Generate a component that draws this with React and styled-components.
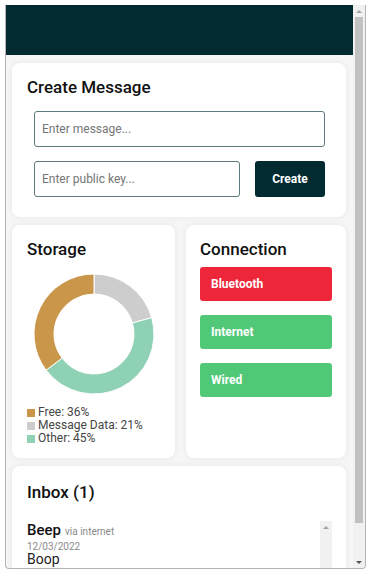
import React from "react";
import styled, { createGlobalStyle } from "styled-components";

const Global = createGlobalStyle`
  html, body { margin: 0; padding: 0; background: #ffffff; }
  body { font-family: Roboto, "Noto Sans", Arial, sans-serif; }
  * { box-sizing: border-box; }
`;

const Frame = styled.div`
  margin: 5px 0 0 5px;
  width: 361px;
  height: 564px;
  border: 1px solid #b4b4b4;
  border-top: none;
  border-radius: 0 0 4px 4px;
  overflow: hidden;
  display: flex;
  background: #f6f6f6;
`;

const Viewport = styled.div`
  flex: 1;
  min-width: 0;
  overflow: hidden;
`;

const Scrollbar = styled.div`
  width: 12px;
  flex: none;
  display: flex;
  flex-direction: column;
  background: #f1f1f1;
`;

const ScrollButton = styled.div`
  height: 12px;
  flex: none;
  display: flex;
  align-items: center;
  justify-content: center;
  &::before {
    content: "";
    width: 0;
    height: 0;
    border-left: 3px solid transparent;
    border-right: 3px solid transparent;
    ${(p) =>
      p.$dir === "up"
        ? `border-bottom: 3px solid ${p.$color};`
        : `border-top: 3px solid ${p.$color};`}
  }
`;

const Track = styled.div`
  flex: 1;
  display: flex;
  flex-direction: column;
`;

const Thumb = styled.div`
  height: ${(p) => p.$size}px;
  margin: 0 2px;
  background: #c1c1c1;
`;

const Header = styled.header`
  height: 50px;
  background: #022a31;
`;

const Main = styled.main`
  padding: 8px 7px 8px 6px;
  display: flex;
  flex-direction: column;
  gap: 8px;
`;

const Card = styled.section`
  background: #ffffff;
  border-radius: 8px;
  box-shadow: 0 0 6px rgba(0, 0, 0, 0.07);
  padding: ${(p) => p.$pad || "14px 15px"};
  min-width: 0;
`;

const Title = styled.h2`
  margin: 0;
  font-family: Roboto, Arial, sans-serif;
  font-size: 17px;
  line-height: 20px;
  font-weight: 500;
  color: #111;
`;

const Form = styled.div`
  margin: 14px 6px 6px 7px;
  display: flex;
  flex-direction: column;
  gap: 14px;
`;

const Row = styled.div`
  display: flex;
  gap: 15px;
`;

const Input = styled.input`
  display: block;
  width: 100%;
  flex: ${(p) => (p.$grow ? "1" : "none")};
  min-width: 0;
  height: 36px;
  border: 1px solid #5f7a7e;
  border-radius: 3px;
  padding: 0 7px;
  font-family: Roboto, Arial, sans-serif;
  font-size: 12px;
  color: #222;
  background: #fff;
  outline: none;
  &::placeholder { color: #757575; }
`;

const CreateButton = styled.button`
  width: 70px;
  height: 36px;
  flex: none;
  border: none;
  border-radius: 3px;
  background: #022a31;
  color: #fff;
  font-family: Roboto, Arial, sans-serif;
  font-size: 12px;
  font-weight: 700;
`;

const Grid = styled.div`
  display: grid;
  grid-template-columns: 163px 1fr;
  gap: 11px;
`;

const ChartWrap = styled.div`
  display: flex;
  justify-content: center;
  margin: 14px 0 11px;
`;

const Legend = styled.ul`
  list-style: none;
  margin: 0;
  padding: 0;
  font-size: 12px;
  line-height: 13px;
  color: #454545;
`;

const LegendItem = styled.li`
  display: flex;
  align-items: center;
  gap: 3px;
  &::before {
    content: "";
    width: 8px;
    height: 8px;
    background: ${(p) => p.$color};
  }
`;

const ConnList = styled.div`
  margin-top: 8px;
  display: flex;
  flex-direction: column;
  gap: 14px;
`;

const ConnButton = styled.button`
  height: 34px;
  border: none;
  border-radius: 3px;
  background: ${(p) => (p.$on ? "#50c878" : "#ee2639")};
  color: #fff;
  text-align: left;
  padding: 0 11px;
  font-family: Roboto, Arial, sans-serif;
  font-size: 12px;
  font-weight: 700;
`;

const MessageList = styled.div`
  margin-top: 19px;
  display: flex;
  background: #fff;
`;

const ListContent = styled.div`
  flex: 1;
  min-width: 0;
`;

const ListTrack = styled.div`
  width: 12px;
  flex: none;
  background: #f1f1f1;
`;

const Message = styled.article`
  padding: 0 0 14px;
`;

const Sender = styled.div`
  display: flex;
  align-items: baseline;
  gap: 4px;
  font-size: 15px;
  line-height: 18px;
  font-weight: 500;
  color: #111;
`;

const Meta = styled.span`
  font-size: 10px;
  font-weight: 400;
  color: #8a8a8a;
`;

const DateText = styled.div`
  font-size: 10px;
  line-height: 12px;
  color: #8a8a8a;
`;

const Body = styled.div`
  font-size: 14px;
  line-height: 13px;
  color: #222;
`;

const segments = [
  { label: "Message Data", value: 21, color: "#cdcdcd" },
  { label: "Other", value: 45, color: "#8fd1b4" },
  { label: "Free", value: 36, color: "#c9964a" },
];

function arcPath(cx, cy, R, r, a0, a1) {
  const pt = (rad, a) => [cx + rad * Math.sin(a), cy - rad * Math.cos(a)];
  const [x0, y0] = pt(R, a0);
  const [x1, y1] = pt(R, a1);
  const [x2, y2] = pt(r, a1);
  const [x3, y3] = pt(r, a0);
  const large = a1 - a0 > Math.PI ? 1 : 0;
  return `M${x0} ${y0} A${R} ${R} 0 ${large} 1 ${x1} ${y1} L${x2} ${y2} A${r} ${r} 0 ${large} 0 ${x3} ${y3} Z`;
}

function Donut() {
  const total = segments.reduce((s, x) => s + x.value, 0);
  let acc = 0;
  return (
    <svg width="122" height="122" viewBox="0 0 122 122">
      {segments.map((s) => {
        const a0 = (acc / total) * Math.PI * 2;
        acc += s.value;
        const a1 = (acc / total) * Math.PI * 2;
        return (
          <path
            key={s.label}
            d={arcPath(61, 61, 60, 40, a0, a1)}
            fill={s.color}
            stroke="#fff"
            strokeWidth="1"
          />
        );
      })}
    </svg>
  );
}

export default function App() {
  return (
    <>
      <Global />
      <Frame>
        <Viewport>
          <Header />
          <Main>
            <Card>
              <Title>Create Message</Title>
              <Form>
                <Input placeholder="Enter message..." />
                <Row>
                  <Input $grow placeholder="Enter public key..." />
                  <CreateButton>Create</CreateButton>
                </Row>
              </Form>
            </Card>
            <Grid>
              <Card $pad="14px 15px 13px">
                <Title>Storage</Title>
                <ChartWrap>
                  <Donut />
                </ChartWrap>
                <Legend>
                  <LegendItem $color="#c9964a">Free: 36%</LegendItem>
                  <LegendItem $color="#cdcdcd">Message Data: 21%</LegendItem>
                  <LegendItem $color="#8fd1b4">Other: 45%</LegendItem>
                </Legend>
              </Card>
              <Card $pad="14px 14px">
                <Title>Connection</Title>
                <ConnList>
                  <ConnButton>Bluetooth</ConnButton>
                  <ConnButton $on>Internet</ConnButton>
                  <ConnButton $on>Wired</ConnButton>
                </ConnList>
              </Card>
            </Grid>
            <Card $pad="16px 14px 16px 15px">
              <Title>Inbox (1)</Title>
              <MessageList>
                <ListContent>
                  <Message>
                    <Sender>
                      Beep <Meta>via internet</Meta>
                    </Sender>
                    <DateText>12/03/2022</DateText>
                    <Body>Boop</Body>
                  </Message>
                </ListContent>
                <ListTrack>
                  <ScrollButton $dir="up" $color="#a3a3a3" />
                </ListTrack>
              </MessageList>
            </Card>
          </Main>
        </Viewport>
        <Scrollbar>
          <ScrollButton $dir="up" $color="#a3a3a3" />
          <Track>
            <Thumb $size={506} />
          </Track>
          <ScrollButton $dir="down" $color="#505050" />
        </Scrollbar>
      </Frame>
    </>
  );
}
